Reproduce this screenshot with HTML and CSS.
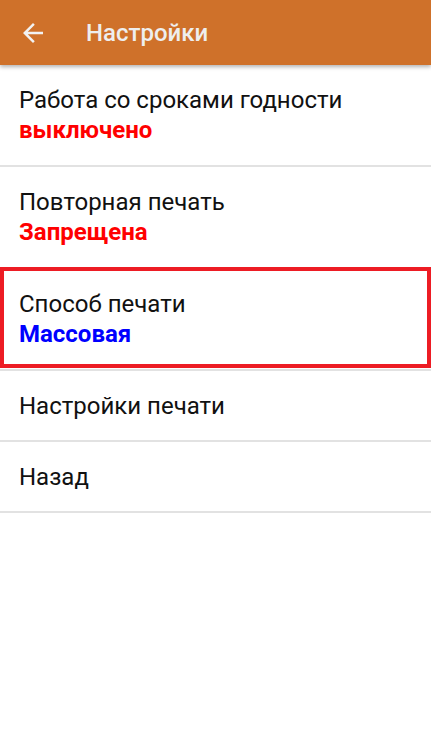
FILE: index.html
```html
<!DOCTYPE html>
<html lang="ru">
  <head>
    <meta charset="UTF-8" />
    <meta name="viewport" content="width=device-width, initial-scale=1.0" />
    <title>Настройки</title>
    <link rel="stylesheet" href="styles.css">
  </head>

  <body>
    <div class="app-bar">
      <button class="back-button" type="button" aria-label="Назад">
        <svg width="24" height="24" viewBox="0 0 24 24">
          <path d="M20 11H7.83l5.59-5.59L12 4l-8 8 8 8 1.41-1.41L7.83 13H20v-2z" fill="currentColor"/>
        </svg>
      </button>
      <div class="app-title">Настройки</div>
    </div>

    <div class="settings-list">
      <div class="item two-line">
        <div class="item-title">Работа со сроками годности</div>
        <div class="item-value value-red">выключено</div>
      </div>

      <div class="item two-line">
        <div class="item-title">Повторная печать</div>
        <div class="item-value value-red">Запрещена</div>
      </div>

      <div class="item two-line marked">
        <div class="item-title">Способ печати</div>
        <div class="item-value value-blue">Массовая</div>
        <div class="mark-frame"></div>
      </div>

      <div class="item">
        <div class="item-title">Настройки печати</div>
      </div>

      <div class="item">
        <div class="item-title">Назад</div>
      </div>
    </div>
  </body>
</html>
```

FILE: styles.css
```css
/* Page */
body {
  margin: 0;
  background-color: #ffffff;
  font-family: Roboto, "Noto Sans", sans-serif;
  color: #111111;
}

/* Top bar */
.app-bar {
  height: 65px;
  display: flex;
  align-items: center;
  background-color: #cf712a;
  box-shadow: 0 2px 4px rgba(0, 0, 0, 0.3);
  position: relative;
  z-index: 1;
}

.back-button {
  width: 30px;
  height: 30px;
  margin-left: 18px;
  padding: 0;
  border: none;
  background: none;
  color: #f2f2f2;
  display: flex;
  justify-content: center;
  align-items: center;
}

.back-button svg {
  width: 30px;
  height: 30px;
}

.app-title {
  margin-left: 38px;
  font-size: 24px;
  font-weight: 500;
  color: #eeeeee;
}

/* List */
.item {
  padding: 20px 19px 19px;
  border-bottom: 2px solid #e2e2e2;
}

.item.two-line {
  padding-bottom: 20px;
}

.item-title {
  font-size: 24px;
  line-height: 30px;
}

.item-value {
  font-size: 24px;
  line-height: 30px;
  font-weight: bold;
}

.value-red {
  color: #ff0000;
}

.value-blue {
  color: #0000ff;
}

/* Red highlight drawn over the selected row */
.item.marked {
  position: relative;
}

.mark-frame {
  position: absolute;
  top: -2px;
  left: 0;
  right: 0;
  bottom: 1px;
  border: 4px solid #ed1c24;
  pointer-events: none;
}
```
